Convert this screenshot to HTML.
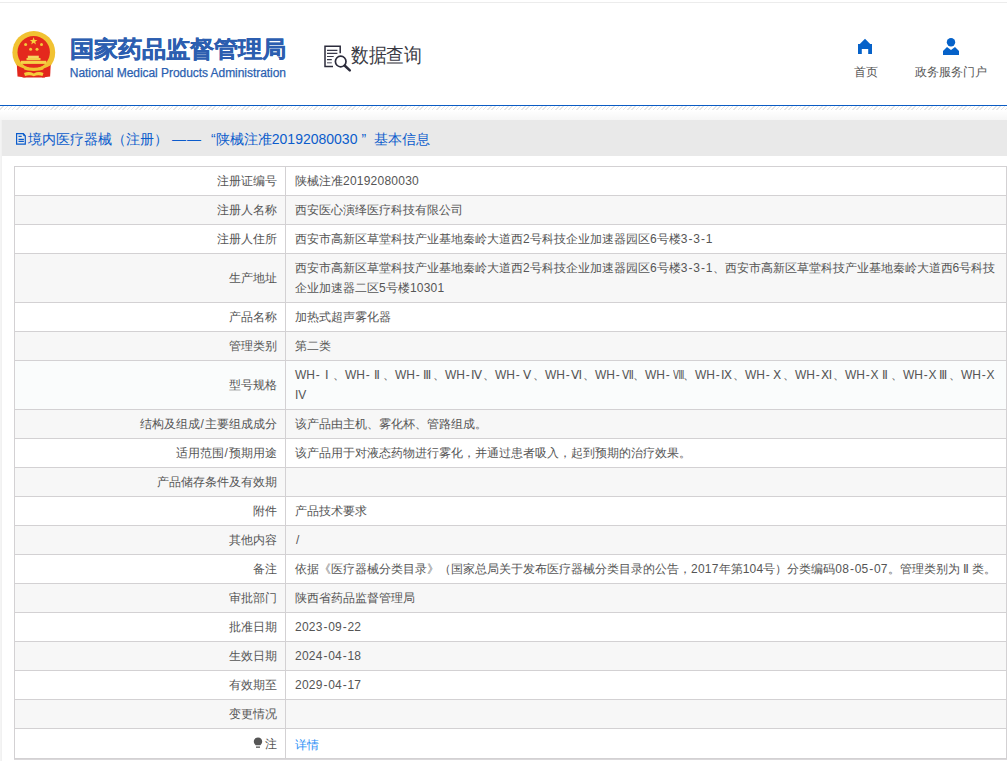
<!DOCTYPE html>
<html><head><meta charset="utf-8">
<style>
html,body{margin:0;padding:0;background:#fff;}
body{width:1007px;height:761px;overflow:hidden;position:relative;font-family:"Liberation Sans",sans-serif;color:#444;}
.abs{position:absolute;}
#topline{left:0;top:2px;width:1007px;height:1px;background:#ececec;}
#logo{left:8px;top:28px;width:52px;height:52px;}
#cn{left:70px;top:34px;font-size:24px;font-weight:bold;color:#2c5eb0;-webkit-text-stroke:0.3px #2c5eb0;line-height:30px;white-space:nowrap;transform:scaleY(0.95);transform-origin:0 26px;}
#en{left:69.8px;top:66px;letter-spacing:-0.05px;-webkit-text-stroke:0.25px #2b5fb0;font-size:12px;color:#2b5fb0;line-height:14px;white-space:nowrap;}
#dq{left:320px;top:42px;width:34px;height:32px;}
#dqt{left:350.5px;top:42.4px;font-size:18px;color:#3a3a44;line-height:24px;white-space:nowrap;transform:scale(0.98,1.1);transform-origin:0 0;}
#home{left:858px;top:38px;width:14px;height:16px;}
#homet{left:854px;top:64px;font-size:12px;color:#555;line-height:16px;white-space:nowrap;}
#user{left:942px;top:38px;width:18px;height:18px;}
#usert{left:915px;top:64px;font-size:12px;color:#555;line-height:16px;white-space:nowrap;}
#blueline{left:0;top:105px;width:1007px;height:1px;background:#0b5cc4;}
#hatch{left:0;top:106px;width:1007px;height:4px;background:repeating-linear-gradient(135deg,#fff 0,#fff 2px,#e6e6e6 2px,#e6e6e6 3px);}
#grad{left:0;top:110px;width:1007px;height:10px;background:linear-gradient(#fff,#f6f6f6);}
#leftcol{left:0;top:120px;width:2px;height:641px;background:linear-gradient(90deg,#f6f6f6,#efefef);}
#titlebar{left:2px;top:120px;width:1005px;height:36px;background:#e9e9e9;}
#ticon{left:16px;top:133px;width:11px;height:12px;}
.q1{display:inline-block;width:10px;text-align:right;}
.q2{display:inline-block;width:13px;text-align:center;}
.rn{display:inline-block;width:12.5px;text-align:center;}
.d{letter-spacing:0.23px;}
.sl{display:inline-block;width:5.5px;text-align:center;}
.h{display:inline-block;width:5.5px;text-align:center;}
#ttext{left:28px;top:129px;font-size:14px;color:#0b5ccc;line-height:20px;white-space:nowrap;}
#tbl{position:absolute;left:14px;top:166px;border-collapse:collapse;width:993px;}
#tbl td{border:1px solid #d3d1d3;font-size:12px;line-height:20px;padding:4px 8px 4px 9px;white-space:nowrap;color:#555;}
#tbl td.l{width:253px;text-align:right;}
#tbl tr:nth-child(even) td{background:#f7f7f7;}
#tbl tr.hov td{background:#fafcfc;}
#tbl tr.last td{height:20px;padding-top:5px;padding-bottom:4px;}
#tbl a{color:#2b8ff6;text-decoration:none;position:relative;top:1px;}
</style></head><body>
<div class="abs" id="topline"></div>
<svg class="abs" id="logo" viewBox="8 28 52 52">
  <circle cx="33.8" cy="52.5" r="21.4" fill="#f1c232"/>
  <circle cx="33.7" cy="52.3" r="16.2" fill="#e4291d"/>
  <polygon points="33.6,37.3 34.6,40 37.4,40 35.2,41.7 36,44.4 33.6,42.8 31.2,44.4 32,41.7 29.8,40 32.6,40" fill="#f7d23c"/>
  <circle cx="25.6" cy="44.4" r="1.5" fill="#f3ca3a"/>
  <circle cx="41.5" cy="44.6" r="1.5" fill="#f3ca3a"/>
  <circle cx="30.6" cy="49.2" r="1.5" fill="#f3ca3a"/>
  <circle cx="37" cy="49.2" r="1.5" fill="#f3ca3a"/>
  <rect x="27.8" y="55.7" width="11" height="2.4" fill="#f6d561"/>
  <rect x="26.5" y="58" width="14" height="2.2" fill="#f4cf4a"/>
  <rect x="21" y="60.8" width="25.3" height="3.1" fill="#f6d24a"/>
  <path d="M16.8 64 L24 68 L25.5 77.5 L17.5 76.5 Z" fill="#e2261c"/>
  <path d="M50.8 64 L43.6 68 L42.1 77.5 L50.1 76.5 Z" fill="#e2261c"/>
  <path d="M22 69 Q33.8 73 45.6 69 L45 77.5 L22.6 77.5 Z" fill="#e2261c"/>
  <path d="M17 64 Q33.8 74 50.6 64" fill="none" stroke="#f1c232" stroke-width="2.6"/>
  <path d="M24 73 Q29 71 33.8 73.5 Q38.5 71 43.5 73 L42.5 76 Q38 74.5 33.8 76.2 Q29.5 74.5 25 76 Z" fill="#f4cd3c"/>
</svg>
<div class="abs" id="cn">国家药品监督管理局</div>
<div class="abs" id="en">National Medical Products Administration</div>
<svg class="abs" id="dq" viewBox="320 42 34 32">
  <path d="M333 66.5 H325 V46.3 H340.2 V53.2" fill="none" stroke="#2b2b3b" stroke-width="1.5"/>
  <path d="M327 50.4 H337.4 M327 53.3 H337.4 M327 56.5 H333.7 M327 59.6 H331.8" stroke="#3a3a4a" stroke-width="1.2"/>
  <path d="M327 62.8 H331.8" stroke="#6a6a78" stroke-width="1.2"/>
  <circle cx="340.7" cy="61.5" r="5.3" fill="none" stroke="#2b2b3b" stroke-width="1.7"/>
  <path d="M344.6 65.5 L349.8 70.3" stroke="#2b2b3b" stroke-width="2.5" stroke-linecap="round"/>
</svg>
<div class="abs" id="dqt">数据查询</div>
<svg class="abs" id="home" viewBox="0 0 14 16">
  <path d="M7 0.8 L12.2 5.9 H14 V16 H10.2 V11 H3.8 V16 H0 V5.9 H1.8 Z" fill="#0662c9"/>
</svg>
<div class="abs" id="homet">首页</div>
<svg class="abs" id="user" viewBox="0 0 18 18">
  <circle cx="9" cy="4.2" r="4.2" fill="#0662c9"/>
  <path d="M5 9 L9 12 L13 9 L17 13 V17 H1 V13 Z" fill="#0662c9"/>
</svg>
<div class="abs" id="usert">政务服务门户</div>
<div class="abs" id="blueline"></div>
<div class="abs" id="hatch"></div>
<div class="abs" id="grad"></div>
<div class="abs" id="leftcol"></div>
<div class="abs" id="titlebar"></div>
<svg class="abs" id="ticon" viewBox="0 0 11 12">
  <path d="M0.6 0.6 H7.4 L9.3 2.9 V11.2 H0.6 Z" fill="none" stroke="#0b5ccc" stroke-width="1.2"/>
  <path d="M7.2 1.2 L8.8 2.9" stroke="#0b5ccc" stroke-width="1.6"/>
  <path d="M2.5 3.4 H5.7 M2.5 6.4 H7.9 M2.5 8.4 H7.9" stroke="#0b5ccc" stroke-width="1.1"/>
</svg>
<div class="abs" id="ttext">境内医疗器械（注册） <span style="letter-spacing:1px">——</span> <span class="q1">“</span>陕械注准20192080030<span class="q2">”</span> 基本信息</div>
<table id="tbl">
<tr><td class="l">注册证编号</td><td>陕械注准<span class="d">20192080030</span></td></tr>
<tr><td class="l">注册人名称</td><td>西安医心演绎医疗科技有限公司</td></tr>
<tr><td class="l">注册人住所</td><td>西安市高新区草堂科技产业基地秦岭大道西<span class="d">2</span>号科技企业加速器园区<span class="d">6</span>号楼<span class="d">3</span><span class="h">-</span><span class="d">3</span><span class="h">-</span><span class="d">1</span></td></tr>
<tr><td class="l">生产地址</td><td>西安市高新区草堂科技产业基地秦岭大道西<span class="d">2</span>号科技企业加速器园区<span class="d">6</span>号楼<span class="d">3</span><span class="h">-</span><span class="d">3</span><span class="h">-</span><span class="d">1</span>、西安市高新区草堂科技产业基地秦岭大道西<span class="d">6</span>号科技<br>企业加速器二区<span class="d">5</span>号楼<span class="d">10301</span></td></tr>
<tr><td class="l">产品名称</td><td>加热式超声雾化器</td></tr>
<tr><td class="l">管理类别</td><td>第二类</td></tr>
<tr class="hov"><td class="l">型号规格</td><td>WH<span class="h">-</span><span class="rn">Ⅰ</span>、WH<span class="h">-</span><span class="rn">Ⅱ</span>、WH<span class="h">-</span><span class="rn">Ⅲ</span>、WH<span class="h">-</span><span class="rn">Ⅳ</span>、WH<span class="h">-</span><span class="rn">Ⅴ</span>、WH<span class="h">-</span><span class="rn">Ⅵ</span>、WH<span class="h">-</span><span class="rn"><span style="display:inline-block;transform:scaleX(0.885)">Ⅶ</span></span>、WH<span class="h">-</span><span class="rn"><span style="display:inline-block;transform:scaleX(0.719)">Ⅷ</span></span>、WH<span class="h">-</span><span class="rn">Ⅸ</span>、WH<span class="h">-</span><span class="rn">Ⅹ</span>、WH<span class="h">-</span><span class="rn">Ⅺ</span>、WH<span class="h">-</span>X<span class="rn">Ⅱ</span>、WH<span class="h">-</span>X<span class="rn">Ⅲ</span>、WH<span class="h">-</span>X<br>IV</td></tr>
<tr><td class="l">结构及组成<span class="sl">/</span>主要组成成分</td><td>该产品由主机、雾化杯、管路组成。</td></tr>
<tr><td class="l">适用范围<span class="sl">/</span>预期用途</td><td>该产品用于对液态药物进行雾化，并通过患者吸入，起到预期的治疗效果。</td></tr>
<tr><td class="l">产品储存条件及有效期</td><td></td></tr>
<tr><td class="l">附件</td><td>产品技术要求</td></tr>
<tr><td class="l">其他内容</td><td><span class="sl">/</span></td></tr>
<tr><td class="l">备注</td><td>依据《医疗器械分类目录》（国家总局关于发布医疗器械分类目录的公告，<span class="d">2017</span>年第<span class="d">104</span>号）分类编码<span class="d">08</span><span class="h">-</span><span class="d">05</span><span class="h">-</span><span class="d">07</span>。管理类别为<span class="rn">Ⅱ</span>类。</td></tr>
<tr><td class="l">审批部门</td><td>陕西省药品监督管理局</td></tr>
<tr><td class="l">批准日期</td><td><span class="d">2023</span><span class="h">-</span><span class="d">09</span><span class="h">-</span><span class="d">22</span></td></tr>
<tr><td class="l">生效日期</td><td><span class="d">2024</span><span class="h">-</span><span class="d">04</span><span class="h">-</span><span class="d">18</span></td></tr>
<tr><td class="l">有效期至</td><td><span class="d">2029</span><span class="h">-</span><span class="d">04</span><span class="h">-</span><span class="d">17</span></td></tr>
<tr><td class="l">变更情况</td><td></td></tr>
<tr class="last"><td class="l"><svg width="10" height="12" viewBox="0 0 10 12" style="vertical-align:-1px;margin-right:2px"><path d="M5 0.5 C2.3 0.5 0.8 2.4 0.8 4.6 C0.8 6.4 2 7.3 2.6 8.3 H7.4 C8 7.3 9.2 6.4 9.2 4.6 C9.2 2.4 7.7 0.5 5 0.5 Z" fill="#555"/><rect x="3" y="9.5" width="4" height="1.3" fill="#555"/></svg>注</td><td><a>详情</a></td></tr>
</table>
<div class="abs" style="left:14px;top:759px;width:993px;height:1px;background:#dad8da"></div>
</body></html>
